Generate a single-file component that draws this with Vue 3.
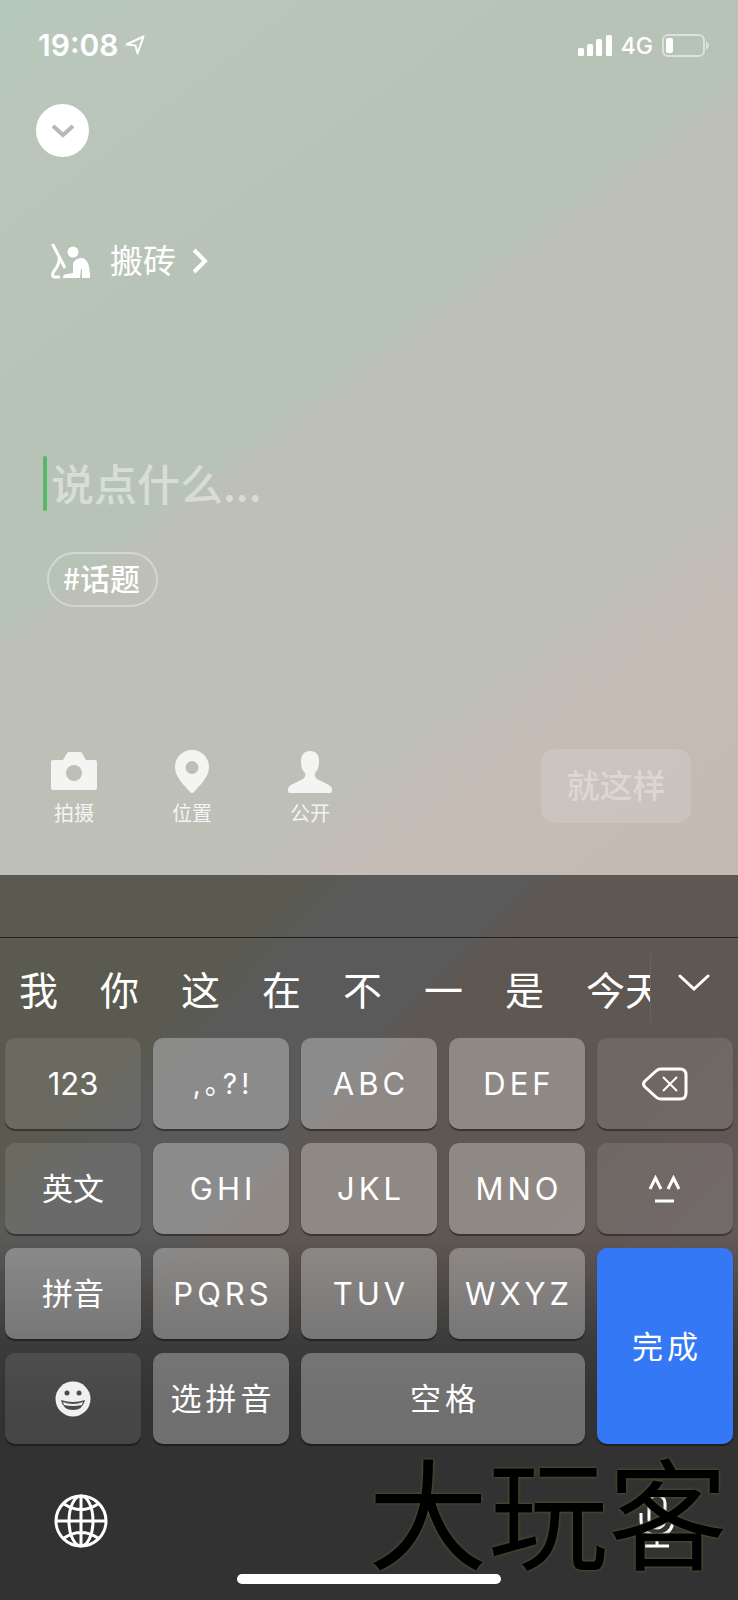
<template>
  <div class="screen">
    <main class="composer">
      <header class="statusBar">
        <div class="statusLeft">
          <span class="time">19:08</span>
          <svg class="locationIcon" viewBox="0 0 20 20">
            <path d="M1.500 9.500L18.500 1.500L12.500 18.500L10.500 10.500Z" />
          </svg>
        </div>
        <div class="statusRight">
          <svg class="signalIcon" viewBox="0 0 34 22">
            <rect x="0" y="14" width="6" height="8" rx="1.500" />
            <rect x="9" y="10" width="6" height="12" rx="1.500" />
            <rect x="18" y="5" width="6" height="17" rx="1.500" />
            <rect x="28" y="1" width="6" height="21" rx="1.500" />
          </svg>
          <span class="network">4G</span>
          <svg class="batteryIcon" viewBox="0 0 48 24">
            <rect class="batteryCase" x="1" y="2" width="41" height="21" rx="5" />
            <rect class="batteryLevel" x="4" y="5" width="7" height="15" rx="2" />
            <path class="batteryTip" d="M44 8Q50 12 44 17Z" />
          </svg>
        </div>
      </header>

      <button class="closeButton" aria-label="收起">
        <svg viewBox="0 0 24 14"><path d="M2 2L12 11L22 2" /></svg>
      </button>

      <button class="moodButton">
        <svg class="moodIcon" viewBox="0 0 40 36">
          <path class="moodLine" d="M1.500 1L14 25M8 14Q9 21 3 28Q0 33 3 34H9" />
          <circle cx="22" cy="9" r="5.500" />
          <path d="M22 20Q25 15 31 15Q39 16 39 35H31V26H30L29 35H12Q12 31 16 31L22 30Z" />
        </svg>
        <span>搬砖</span>
        <svg class="moodArrow" viewBox="0 0 16 26"><path d="M2 2L13 13L2 24" /></svg>
      </button>

      <div class="inputRow">
        <span class="cursor"></span>
        <input type="text" aria-label="说点什么" placeholder="说点什么..." v-model="texto" />
      </div>

      <button class="topicButton">#话题</button>

      <div class="actions">
        <div class="tools">
          <button class="tool">
            <svg viewBox="0 0 46 46">
              <path fill-rule="evenodd" d="M2 11H12L16 4Q17 3 18 3H29Q30 3 31 4L35 11H44Q46 11 46 13V39Q46 41 44 41H2Q0 41 0 39V13Q0 11 2 11ZM23 16A8 8 0 1 0 23 32A8 8 0 1 0 23 16Z" />
            </svg>
            <span>拍摄</span>
          </button>
          <button class="tool">
            <svg viewBox="0 0 46 46">
              <path fill-rule="evenodd" d="M23 1C13 1 6 9 6 18C6 28 15 36 21 43Q23 45 25 43C31 36 40 28 40 18C40 9 33 1 23 1ZM23 12A6.500 6.500 0 1 1 23 25A6.500 6.500 0 1 1 23 12Z" />
            </svg>
            <span>位置</span>
          </button>
          <button class="tool">
            <svg viewBox="0 0 46 46">
              <path d="M23 2C17 2 14 6 14 12C14 19 16 22 18 24Q19 28 16 30L4 36Q1 38 1 40V42Q1 44 3 44H43Q45 44 45 42V40Q45 38 42 36L30 30Q27 28 28 24C30 22 32 19 32 12C32 6 29 2 23 2Z" />
            </svg>
            <span>公开</span>
          </button>
        </div>
        <button class="sendButton">就这样</button>
      </div>
    </main>

    <section class="keyboard">
      <div class="accessoryBar"></div>

      <div class="candidates">
        <div class="candidateList">
          <button v-for="palabra in candidatos" :key="palabra">{{ palabra }}</button>
        </div>
        <button class="expandButton" aria-label="展开">
          <svg viewBox="0 0 32 18"><path d="M2 2L16 15L30 2" /></svg>
        </button>
      </div>

      <div class="keys">
        <button v-for="tecla in teclas" :key="tecla.id" class="key" :class="tecla.clase" :aria-label="tecla.id">
          <svg v-if="tecla.icono === 'delete'" class="deleteIcon" viewBox="0 0 46 34">
            <path d="M19 2H38Q44 2 44 8V26Q44 32 38 32H19Q16 32 14 30L3 20Q0 17 3 14L14 4Q16 2 19 2Z" />
            <path class="deleteCross" d="M21 10L35 24M35 10L21 24" />
          </svg>
          <svg v-else-if="tecla.icono === 'face'" class="faceIcon" viewBox="0 0 34 28">
            <path d="M2 14L7.500 3L13 14M20 14L25.500 3L31 14M7 26H26" />
          </svg>
          <svg v-else-if="tecla.icono === 'emoji'" class="emojiIcon" viewBox="0 0 36 36">
            <circle cx="18" cy="18" r="17.500" />
            <g class="emojiFace">
              <circle cx="12" cy="12" r="2.500" />
              <circle cx="24" cy="12" r="2.500" />
              <path d="M6 19Q18 23 30 19Q28 29 18 29Q8 29 6 19Z" />
            </g>
            <path d="M8 21Q18 25 28 21L27 24Q18 26 9 24Z" />
          </svg>
          <template v-else>{{ tecla.id }}</template>
        </button>
      </div>

      <footer class="bottomBar">
        <div class="bottomIcons">
          <button aria-label="切换键盘">
            <svg class="globeIcon" viewBox="0 0 54 54">
              <circle cx="27" cy="27" r="25" />
              <ellipse cx="27" cy="27" rx="12" ry="25" />
              <path d="M27 2V52M2 27H52M10 10Q27 21 44 10M10 44Q27 33 44 44" />
            </svg>
          </button>
          <button aria-label="语音输入">
            <svg class="micIcon" viewBox="0 0 38 56">
              <rect x="11" y="2" width="16" height="33" rx="8" />
              <path d="M3 20V26Q3 42 19 42Q35 42 35 26V20M19 42V53M7 53H31" />
            </svg>
          </button>
        </div>
        <div class="homeIndicator"></div>
        <span class="watermark">大玩客</span>
      </footer>
    </section>
  </div>
</template>

<script setup>
import { ref } from "vue";

let texto = ref("");

const candidatos = ["我", "你", "这", "在", "不", "一", "是", "今天"];

const teclas = [
  { id: "123", clase: "dark plain" },
  { id: ",。?!", clase: "marks" },
  { id: "ABC" },
  { id: "DEF" },
  { id: "删除", clase: "dark", icono: "delete" },
  { id: "英文", clase: "dark plain han" },
  { id: "GHI" },
  { id: "JKL" },
  { id: "MNO" },
  { id: "颜文字", clase: "dark", icono: "face" },
  { id: "拼音", clase: "plain han" },
  { id: "PQRS" },
  { id: "TUV" },
  { id: "WXYZ" },
  { id: "完成", clase: "done han" },
  { id: "表情", clase: "dark", icono: "emoji" },
  { id: "选拼音", clase: "han" },
  { id: "空格", clase: "space han" },
];
</script>

<style>
body {
  margin: 0;
  background: #323232;
}
</style>

<style scoped>
* {
  box-sizing: border-box;
}

.screen {
  display: flex;
  flex-direction: column;
  min-height: 100vh;
  color: #fff;
  font-family: Inter, "Noto Sans CJK SC", sans-serif;
}

button,
input {
  margin: 0;
  padding: 0;
  border: 0;
  background: none;
  color: inherit;
  font: inherit;
}

svg {
  display: block;
  fill: currentColor;
}

.composer {
  display: flex;
  flex-direction: column;
  align-items: flex-start;
  padding: 0 28px 49px 36px;
  background: linear-gradient(
    143deg,
    #b5c9bb 0%,
    #bbc6bb 11%,
    #b8c3b8 30%,
    #b8c3b8 44%,
    #bebfb6 46%,
    #bebfb7 73%,
    #c5bcb6 80%,
    #c3bab4 100%
  );
}

.statusBar {
  display: flex;
  align-items: center;
  justify-content: space-between;
  width: 100%;
  height: 90px;
  margin-bottom: 14px;
}

.statusLeft,
.statusRight {
  display: flex;
  align-items: center;
}

.statusLeft {
  gap: 7px;
  padding-left: 2px;
}

.statusRight {
  gap: 9px;
}

.time {
  font-size: 30px;
  font-weight: 600;
}

.locationIcon {
  width: 20px;
  height: 20px;
  fill: none;
  stroke: currentColor;
  stroke-width: 2;
  stroke-linejoin: round;
}

.signalIcon {
  width: 34px;
  height: 22px;
}

.network {
  padding-top: 2px;
  font-size: 23px;
  font-weight: 500;
}

.batteryIcon {
  width: 48px;
  height: 24px;
}

.batteryCase {
  fill: none;
  stroke: rgba(255, 255, 255, 0.5);
  stroke-width: 2;
}

.batteryTip {
  fill: rgba(255, 255, 255, 0.5);
}

.closeButton {
  display: flex;
  align-items: center;
  justify-content: center;
  width: 53px;
  height: 53px;
  border-radius: 50%;
  background: #fff;
  color: #b3bcb4;
}

.closeButton svg {
  width: 24px;
  height: 14px;
  fill: none;
  stroke: currentColor;
  stroke-width: 4;
}

.moodButton {
  display: flex;
  align-items: center;
  height: 40px;
  margin: 84px 0 0 15px;
  font-size: 33px;
  line-height: 40px;
}

.moodIcon {
  width: 40px;
  height: 36px;
  margin-right: 19px;
}

.moodLine {
  fill: none;
  stroke: currentColor;
  stroke-width: 3;
}

.moodArrow {
  width: 16px;
  height: 26px;
  margin-left: 16px;
  fill: none;
  stroke: currentColor;
  stroke-width: 4;
}

.inputRow {
  display: flex;
  align-items: center;
  gap: 4px;
  width: 100%;
  margin-top: 175px;
  padding-left: 7px;
}

.cursor {
  width: 4px;
  height: 55px;
  border-radius: 2px;
  background: #56b96a;
}

.inputRow input {
  flex: 1;
  min-width: 0;
  height: 55px;
  padding-bottom: 4px;
  outline: none;
  font-family: "Noto Sans CJK SC", sans-serif;
  font-size: 43px;
  font-weight: 500;
}

.inputRow input::placeholder {
  color: rgba(255, 255, 255, 0.45);
  opacity: 1;
}

.topicButton {
  height: 55px;
  margin: 41px 0 0 11px;
  padding: 0 16px 4px 14px;
  border: 2px solid rgba(255, 255, 255, 0.35);
  border-radius: 28px;
  font-family: "Noto Sans CJK SC", sans-serif;
  font-size: 30px;
  font-weight: 500;
  line-height: 47px;
}

.actions {
  display: flex;
  align-items: flex-start;
  justify-content: space-between;
  width: 100%;
  margin-top: 142px;
  padding: 0 19px 0 15px;
}

.tools {
  display: flex;
  gap: 72px;
  color: #f4f4f2;
}

.tool {
  display: flex;
  flex-direction: column;
  align-items: center;
  gap: 7px;
  font-size: 20px;
  line-height: 24px;
}

.tool svg {
  width: 46px;
  height: 46px;
}

.sendButton {
  width: 150px;
  height: 74px;
  padding-bottom: 4px;
  border-radius: 14px;
  background: rgba(255, 255, 255, 0.12);
  color: rgba(255, 255, 255, 0.34);
  font-size: 33px;
  font-weight: 500;
}

.keyboard {
  display: flex;
  flex: 1;
  flex-direction: column;
  background:
    linear-gradient(180deg, rgba(50, 50, 50, 0) 50%, #3c3c3c 64%, #323232 74%),
    linear-gradient(
      134deg,
      #5a5a50 0%,
      #5a5a50 21%,
      #5a5a5a 26%,
      #5a5a5a 37%,
      #5f5751 40%,
      #5f5751 60%,
      #625858 72%
    );
}

.accessoryBar {
  height: 63px;
  border-bottom: 1px solid #222;
}

.candidates {
  display: flex;
  align-items: center;
  height: 100px;
}

.candidateList {
  display: flex;
  flex: 1;
  gap: 42px;
  min-width: 0;
  padding: 6px 0 0 19px;
  overflow: hidden;
}

.candidateList button {
  flex: none;
  font-size: 39px;
  line-height: 60px;
}

.expandButton {
  display: flex;
  justify-content: center;
  width: 88px;
  height: 68px;
  padding: 20px 2px 0 0;
  border-left: 1px solid rgba(255, 255, 255, 0.08);
}

.expandButton svg {
  width: 32px;
  height: 18px;
  fill: none;
  stroke: currentColor;
  stroke-width: 3;
  stroke-linecap: round;
}

.keys {
  display: grid;
  grid-template-columns: repeat(5, 1fr);
  grid-auto-rows: 91px;
  gap: 14px 12px;
  padding: 0 5px;
}

.key {
  display: flex;
  align-items: center;
  justify-content: center;
  border-radius: 10px;
  background: rgba(255, 255, 255, 0.3);
  box-shadow: 0 2px 1px rgba(0, 0, 0, 0.4);
  font-size: 31px;
  letter-spacing: 4px;
  text-indent: 4px;
}

.plain {
  letter-spacing: 0;
  text-indent: 0;
}

.han {
  padding-bottom: 4px;
}

.marks {
  padding-bottom: 4px;
  font-size: 28px;
  font-feature-settings: "halt";
}

.dark {
  background: rgba(255, 255, 255, 0.1);
}

.done {
  grid-row: span 2;
  background: #3478f6;
}

.space {
  grid-column: span 2;
}

.deleteIcon {
  width: 46px;
  height: 34px;
  fill: none;
  stroke: currentColor;
  stroke-width: 3;
}

.deleteCross {
  stroke-width: 2;
}

.faceIcon {
  width: 34px;
  height: 28px;
  fill: none;
  stroke: currentColor;
  stroke-width: 3;
}

.emojiIcon {
  width: 36px;
  height: 36px;
  color: #f0f0f0;
}

.emojiFace {
  fill: #4c4c4c;
}

.bottomBar {
  position: relative;
  display: flex;
  flex: 1;
  flex-direction: column;
  align-items: center;
  justify-content: space-between;
  padding: 49px 0 16px;
}

.bottomIcons {
  display: flex;
  justify-content: space-between;
  width: 100%;
  padding: 0 62px 0 54px;
}

.globeIcon {
  width: 54px;
  height: 56px;
  fill: none;
  stroke: currentColor;
  stroke-width: 3;
}

.micIcon {
  width: 38px;
  height: 56px;
  fill: none;
  stroke: currentColor;
  stroke-width: 3;
}

.homeIndicator {
  width: 264px;
  height: 10px;
  border-radius: 5px;
  background: #fff;
}

.watermark {
  position: absolute;
  right: 10px;
  bottom: 22px;
  color: #000;
  font-size: 120px;
  font-weight: 400;
  line-height: 120px;
  text-shadow: 0 0 3px #6b6130;
  pointer-events: none;
}
</style>
